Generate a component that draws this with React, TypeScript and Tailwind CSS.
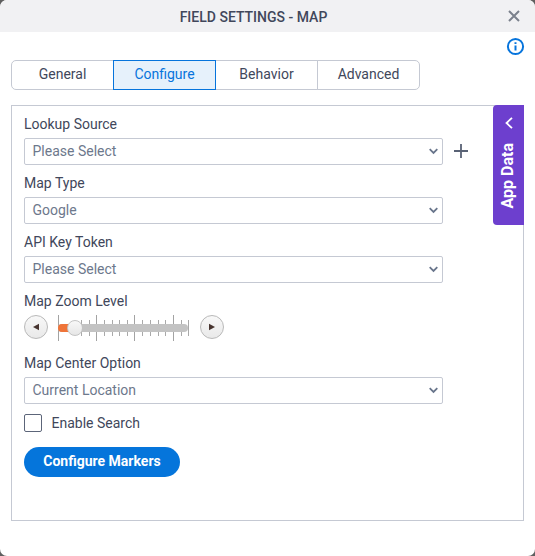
import { useState } from "react"

const TABS = ["General", "Configure", "Behavior", "Advanced"]

// major ticks run the full height, minor ones only stick out of the track
const MAJOR_TICKS = [0, 38, 76, 115]
const MINOR_TICKS = [23, 31, 46, 54, 61, 69, 84, 92, 100, 107, 123, 130]

function SelectField({ label, value }: { label: string; value: string }) {
  return (
    <div>
      <div className="h-[27px] pt-[3px] leading-5">{label}</div>
      <button
        type="button"
        className="flex h-[27px] w-[419px] items-center justify-between rounded-[2px] border border-[#c5c9d3] bg-white pl-[7.5px] pr-[4.5px] text-left text-[#6d788c]"
      >
        <span>{value}</span>
        <svg width="9" height="7" viewBox="0 0 9 7" fill="none" stroke="#68758b" strokeWidth="1.8">
          <path d="M0.7 1.2 L4.5 4.9 L8.3 1.2" />
        </svg>
      </button>
    </div>
  )
}

function StepButton({ dir }: { dir: "left" | "right" }) {
  return (
    <button
      type="button"
      className="flex size-6 items-center justify-center rounded-full border border-[#b9b9b9] bg-gradient-to-b from-[#f8f8f8] to-[#e9e9e9]"
    >
      <svg width="8" height="8" viewBox="0 0 8 8" fill="#47342f">
        <path d={dir === "left" ? "M7 0.8 V7.2 L1 4 Z" : "M1 0.8 V7.2 L7 4 Z"} />
      </svg>
    </button>
  )
}

function ZoomSlider() {
  return (
    <div className="flex h-[27px] items-start">
      <StepButton dir="left" />
      <div className="relative ml-[10px] mr-[11px] h-[27px] w-[131px]">
        <svg className="absolute left-0 top-0" width="131" height="27" shapeRendering="crispEdges">
          {MAJOR_TICKS.map((x) => (
            <rect key={x} x={x} y="0" width="1" height="26" fill="#a3a3a3" />
          ))}
          {MINOR_TICKS.map((x) => (
            <rect key={x} x={x} y="5" width="1" height="16" fill="#a9a9a9" />
          ))}
        </svg>
        <div className="absolute left-0 top-[9px] h-2 w-[130px] overflow-hidden rounded-full bg-[#c3c3c3]">
          <div className="h-2 w-4 bg-[#ef7439]" />
        </div>
        <div className="absolute left-[9px] top-[5px] size-4 rounded-full border border-[#c4c4c4] bg-gradient-to-b from-[#f8f8f8] to-[#e6e6e6]" />
      </div>
      <StepButton dir="right" />
    </div>
  )
}

export default function App() {
  const [active, setActive] = useState("Configure")

  return (
    <div className="h-[556px] w-[535px] bg-[#5f5f5f] font-['Roboto','Liberation_Sans',sans-serif] text-[14px] text-[#41475b]">
      <div className="flex h-full flex-col overflow-hidden rounded-[7px] bg-white">
        <header className="flex h-8 shrink-0 items-center bg-[#f1f1f3] pr-[14px]">
          <h1 className="flex-1 pt-[2px] text-center font-medium">FIELD SETTINGS - MAP</h1>
          <button type="button" aria-label="Close">
            <svg width="14" height="14" viewBox="0 0 14 14" fill="none" stroke="#7b818c" strokeWidth="2">
              <path d="M2 2 L12 12 M12 2 L2 12" />
            </svg>
          </button>
        </header>

        <div className="flex h-7 shrink-0 justify-end pr-[10px] pt-[5px]">
          <svg width="19" height="19" viewBox="0 0 19 19" fill="none" stroke="#0674dc">
            <circle cx="9.5" cy="9.5" r="7.6" strokeWidth="2" />
            <path d="M9.5 8.5 V13.5 M9.5 5.2 V7" strokeWidth="2" />
          </svg>
        </div>

        <nav className="ml-[11px] flex h-[30px] shrink-0">
          {TABS.map((tab) => (
            <button
              key={tab}
              type="button"
              onClick={() => setActive(tab)}
              className={
                "-mr-px h-[30px] w-[103px] border pb-px first:rounded-l-[5px] last:rounded-r-[5px] " +
                (tab === active ? "z-10 border-[#0674dc] bg-[#e6f1fb] text-[#0674dc]" : "border-[#c5c9d3] bg-white")
              }
            >
              {tab}
            </button>
          ))}
        </nav>

        <main className="ml-[11px] mt-[15px] flex h-[416px] w-[513px] shrink-0 border border-[#c5c9d3]">
          <div className="w-[481px] shrink-0 pl-3 pt-[5px]">
            <div className="flex items-end">
              <SelectField label="Lookup Source" value="Please Select" />
              <button type="button" aria-label="Add" className="mb-[7px] ml-[11px]">
                <svg width="14" height="14" viewBox="0 0 14 14" fill="none" stroke="#596275" strokeWidth="1.8">
                  <path d="M7 0 V14 M0 7 H14" />
                </svg>
              </button>
            </div>
            <div className="mt-[5px] flex flex-col gap-[5px]">
              <SelectField label="Map Type" value="Google" />
              <SelectField label="API Key Token" value="Please Select" />
            </div>
            <div className="mt-2 h-6 leading-5">Map Zoom Level</div>
            <ZoomSlider />
            <div className="mt-2">
              <SelectField label="Map Center Option" value="Current Location" />
            </div>
            <label className="mt-[10px] flex h-[18px] items-center">
              <input
                type="checkbox"
                className="size-[18px] appearance-none rounded-[2px] border border-[#5c6579] bg-white"
              />
              <span className="ml-[9.5px]">Enable Search</span>
            </label>
            <button
              type="button"
              className="mt-[15px] h-[30px] w-[156px] rounded-full bg-[#0575db] pb-px font-bold text-white"
            >
              Configure Markers
            </button>
          </div>

          {/* side drawer handle */}
          <button
            type="button"
            className="-mr-px -mt-px flex h-[120px] w-[31px] shrink-0 flex-col items-center rounded-l-[4px] bg-[#6d3fce] pt-3 text-white"
          >
            <svg width="8" height="12" viewBox="0 0 8 12" fill="none" stroke="currentColor" strokeWidth="1.8">
              <path d="M7 0.8 L1.5 6 L7 11.2" />
            </svg>
            <span className="mr-[2px] mt-[14px] rotate-180 text-base leading-5 font-bold [writing-mode:vertical-rl]">
              App Data
            </span>
          </button>
        </main>
      </div>
    </div>
  )
}
